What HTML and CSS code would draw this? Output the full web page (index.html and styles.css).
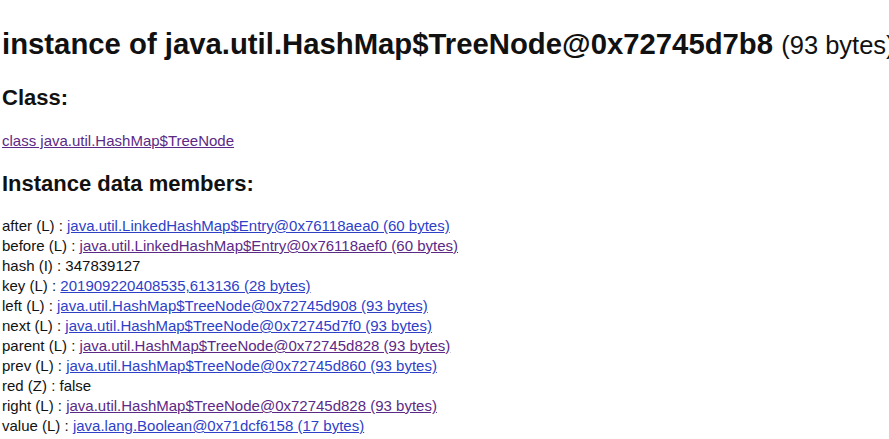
FILE: index.html
```html
<!DOCTYPE html>
<html>
<head>
<meta charset="utf-8">
<link rel="stylesheet" href="styles.css">
</head>
<body>
<h1 class="title">instance of java.util.HashMap$TreeNode@0x72745d7b8 <span class="size">(93 bytes)</span></h1>
<h2 class="sub">Class:</h2>
<p class="classline"><a class="lnk visited" href="#">class java.util.HashMap$TreeNode</a></p>
<h2 class="sub">Instance data members:</h2>
<div class="members">
<div class="row">after (L) : <a class="lnk" href="#">java.util.LinkedHashMap$Entry@0x76118aea0 (60 bytes)</a></div>
<div class="row">before (L) : <a class="lnk visited" href="#">java.util.LinkedHashMap$Entry@0x76118aef0 (60 bytes)</a></div>
<div class="row">hash (I) : 347839127</div>
<div class="row">key (L) : <a class="lnk" href="#">201909220408535,613136 (28 bytes)</a></div>
<div class="row">left (L) : <a class="lnk" href="#">java.util.HashMap$TreeNode@0x72745d908 (93 bytes)</a></div>
<div class="row">next (L) : <a class="lnk" href="#">java.util.HashMap$TreeNode@0x72745d7f0 (93 bytes)</a></div>
<div class="row">parent (L) : <a class="lnk visited" href="#">java.util.HashMap$TreeNode@0x72745d828 (93 bytes)</a></div>
<div class="row">prev (L) : <a class="lnk" href="#">java.util.HashMap$TreeNode@0x72745d860 (93 bytes)</a></div>
<div class="row">red (Z) : false</div>
<div class="row">right (L) : <a class="lnk visited" href="#">java.util.HashMap$TreeNode@0x72745d828 (93 bytes)</a></div>
<div class="row">value (L) : <a class="lnk" href="#">java.lang.Boolean@0x71dcf6158 (17 bytes)</a></div>
</div>
</body>
</html>
```
FILE: styles.css
```css
html, body {
  margin: 0;
  padding: 0;
  background: #ffffff;
}
body {
  font-family: "Liberation Sans", Arial, sans-serif;
  color: #111111;
  padding-left: 2px;
  white-space: nowrap;
  overflow: hidden;
}
.title {
  font-size: 29.3px;
  font-weight: bold;
  margin: 27px 0 0 0;
  line-height: 34px;
}
.size {
  font-weight: normal;
  font-size: 25.5px;
}
.sub {
  font-size: 22px;
  font-weight: bold;
  margin: 22px 0 0 0;
  line-height: 28px;
}
.classline {
  font-size: 15px;
  margin: 19px 0 19px 0;
  line-height: 20px;
}
.classline + .sub {
  margin-top: 0;
}
.members {
  margin-top: 18px;
  font-size: 15px;
  line-height: 20px;
}
.lnk {
  color: #2e3fc8;
  text-decoration: underline;
}
.lnk.visited {
  color: #5b2a86;
}
```
